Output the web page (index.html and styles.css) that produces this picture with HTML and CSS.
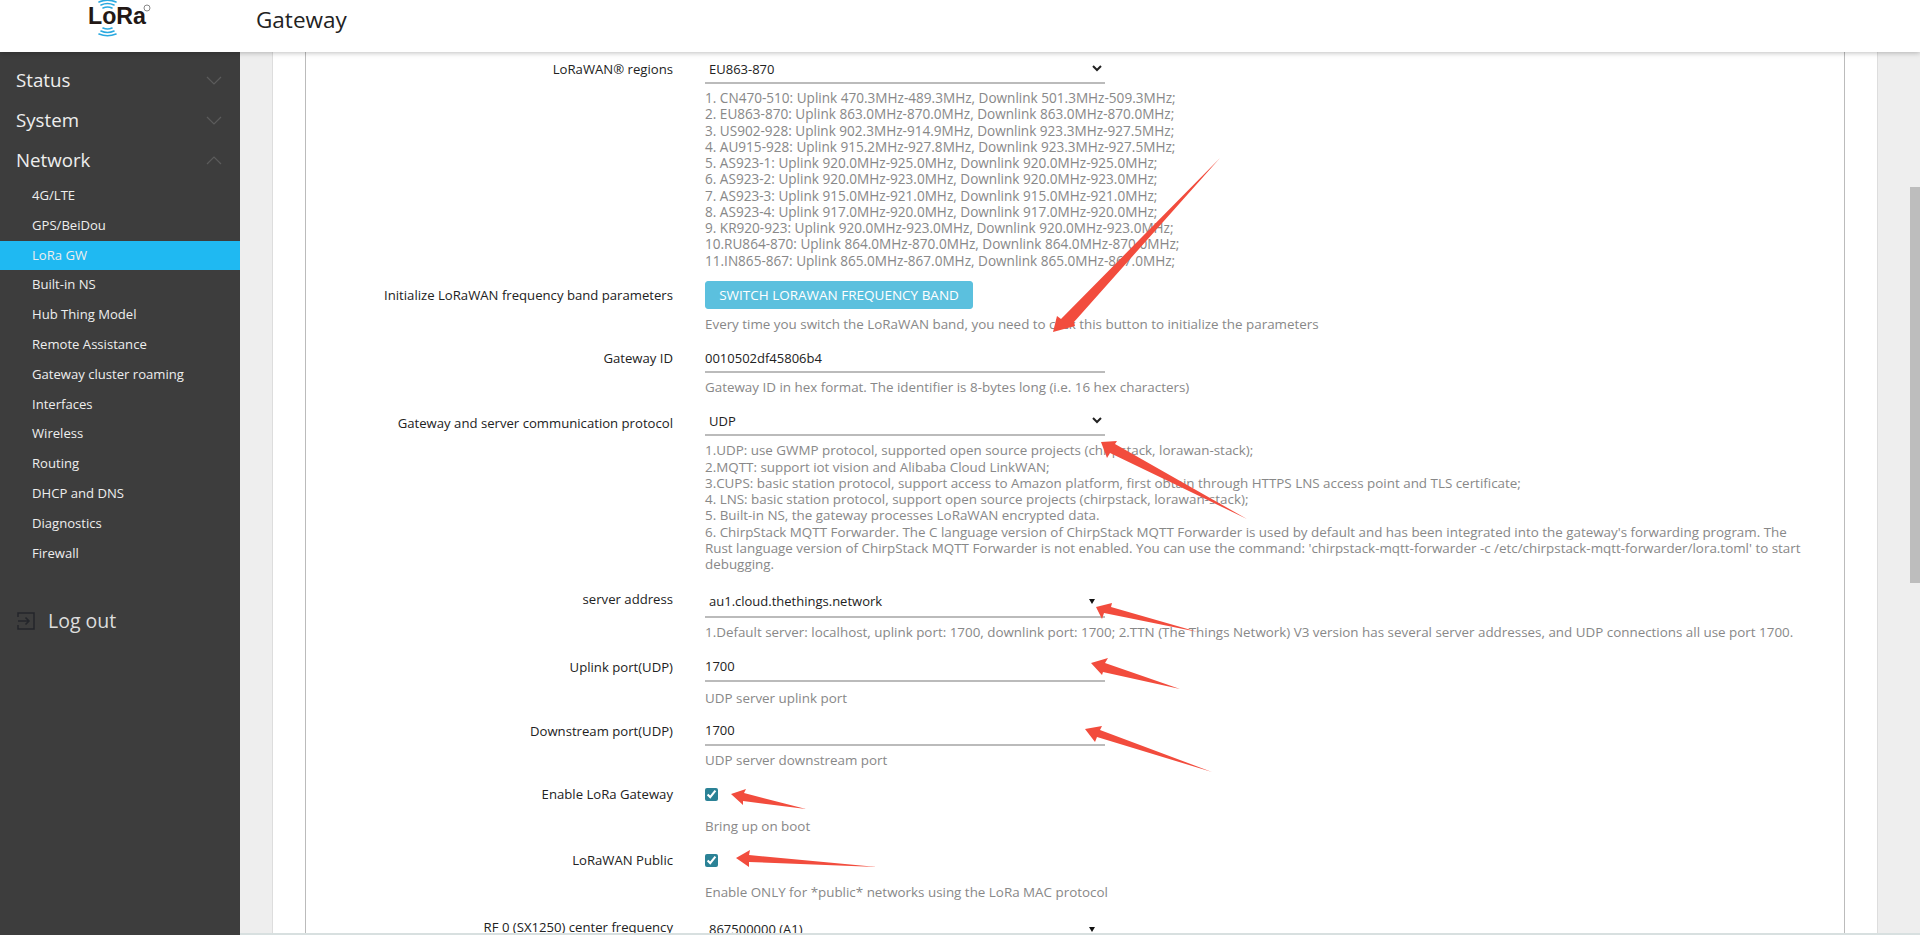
FILE: index.html
```html
<!DOCTYPE html>
<html lang="en">
<head>
<meta charset="utf-8">
<title>Gateway</title>
<link rel="stylesheet" href="styles.css">
</head>
<body>
<header class="topbar">
    <div class="logo">
        <svg width="70" height="40" viewBox="84 0 70 40">
            <g fill="none" stroke="#2aa9e0" stroke-width="1.6" stroke-linecap="round">
                <path d="M99 2 Q107.5 -1.5 116 2"/>
                <path d="M101 5 Q107.5 2 114 5"/>
                <path d="M103 8 Q107.5 6 112 8"/>
                <path d="M103 28 Q107.5 30 112 28"/>
                <path d="M101 31 Q107.5 34 114 31"/>
                <path d="M99 34 Q107.5 37.5 116 34"/>
            </g>
            <text x="88" y="24" class="logo-word" textLength="58" lengthAdjust="spacingAndGlyphs">LoRa</text>
            <circle cx="147" cy="8" r="3" fill="none" stroke="#888" stroke-width="1"/>
        </svg>
    </div>
    <div class="page-title">Gateway</div>
</header>
<div class="layout">
    <aside class="sidebar">
        <div class="menu-top">Status
            <svg class="chevron" width="16" height="9" viewBox="0 0 16 9"><path d="M1 1 L8 8 L15 1"/></svg>
        </div>
        <div class="menu-top">System
            <svg class="chevron" width="16" height="9" viewBox="0 0 16 9"><path d="M1 1 L8 8 L15 1"/></svg>
        </div>
        <div class="menu-top">Network
            <svg class="chevron" width="16" height="9" viewBox="0 0 16 9"><path d="M1 8 L8 1 L15 8"/></svg>
        </div>
        <ul class="submenu">
            <li>4G/LTE</li>
            <li>GPS/BeiDou</li>
            <li class="active">LoRa GW</li>
            <li>Built-in NS</li>
            <li>Hub Thing Model</li>
            <li>Remote Assistance</li>
            <li>Gateway cluster roaming</li>
            <li>Interfaces</li>
            <li>Wireless</li>
            <li>Routing</li>
            <li>DHCP and DNS</li>
            <li>Diagnostics</li>
            <li>Firewall</li>
        </ul>
        <div class="logout">
            <svg width="18" height="18" viewBox="0 0 18 18" fill="none" stroke="#24262b" stroke-width="1.5">
                <path d="M1 5 V1 H17 V17 H1 V13"/>
                <path d="M1 9 H12 M8.5 5.5 L12 9 L8.5 12.5"/>
            </svg>
            <span>Log out</span>
        </div>
    </aside>
    <main class="content">
        <div class="card">
            <div class="panel">
                <div class="row row-wide">
                    <label class="field-label">LoRaWAN® regions</label>
                    <div class="field">
                        <select class="control"><option>EU863-870</option></select>
                        <div class="help help-bands">1. CN470-510: Uplink 470.3MHz-489.3MHz, Downlink 501.3MHz-509.3MHz;<br>
                        2. EU863-870: Uplink 863.0MHz-870.0MHz, Downlink 863.0MHz-870.0MHz;<br>
                        3. US902-928: Uplink 902.3MHz-914.9MHz, Downlink 923.3MHz-927.5MHz;<br>
                        4. AU915-928: Uplink 915.2MHz-927.8MHz, Downlink 923.3MHz-927.5MHz;<br>
                        5. AS923-1: Uplink 920.0MHz-925.0MHz, Downlink 920.0MHz-925.0MHz;<br>
                        6. AS923-2: Uplink 920.0MHz-923.0MHz, Downlink 920.0MHz-923.0MHz;<br>
                        7. AS923-3: Uplink 915.0MHz-921.0MHz, Downlink 915.0MHz-921.0MHz;<br>
                        8. AS923-4: Uplink 917.0MHz-920.0MHz, Downlink 917.0MHz-920.0MHz;<br>
                        9. KR920-923: Uplink 920.0MHz-923.0MHz, Downlink 920.0MHz-923.0MHz;<br>
                        10.RU864-870: Uplink 864.0MHz-870.0MHz, Downlink 864.0MHz-870.0MHz;<br>
                        11.IN865-867: Uplink 865.0MHz-867.0MHz, Downlink 865.0MHz-867.0MHz;</div>
                    </div>
                </div>
                <div class="row">
                    <label class="field-label label-high">Initialize LoRaWAN frequency band parameters</label>
                    <div class="field">
                        <button class="band-button">SWITCH LORAWAN FREQUENCY BAND</button>
                        <div class="help">Every time you switch the LoRaWAN band, you need to click this button to initialize the parameters</div>
                    </div>
                </div>
                <div class="row">
                    <label class="field-label">Gateway ID</label>
                    <div class="field">
                        <input class="control" type="text" value="0010502df45806b4">
                        <div class="help">Gateway ID in hex format. The identifier is 8-bytes long (i.e. 16 hex characters)</div>
                    </div>
                </div>
                <div class="row row-wider">
                    <label class="field-label label-low">Gateway and server communication protocol</label>
                    <div class="field">
                        <select class="control"><option>UDP</option></select>
                        <div class="help">1.UDP: use GWMP protocol, supported open source projects (chirpstack, lorawan-stack);<br>
                        2.MQTT: support iot vision and Alibaba Cloud LinkWAN;<br>
                        3.CUPS: basic station protocol, support access to Amazon platform, first obtain through HTTPS LNS access point and TLS certificate;<br>
                        4. LNS: basic station protocol, support open source projects (chirpstack, lorawan-stack);<br>
                        5. Built-in NS, the gateway processes LoRaWAN encrypted data.<br>
                        6. ChirpStack MQTT Forwarder. The C language version of ChirpStack MQTT Forwarder is used by default and has been integrated into the gateway's forwarding program. The Rust language version of ChirpStack MQTT Forwarder is not enabled. You can use the command: 'chirpstack-mqtt-forwarder -c /etc/chirpstack-mqtt-forwarder/lora.toml' to start debugging.</div>
                    </div>
                </div>
                <div class="row">
                    <label class="field-label label-high">server address</label>
                    <div class="field">
                        <div class="control combo">au1.cloud.thethings.network<span class="combo-arrow"></span></div>
                        <div class="help">1.Default server: localhost, uplink port: 1700, downlink port: 1700; 2.TTN (The Things Network) V3 version has several server addresses, and UDP connections all use port 1700.</div>
                    </div>
                </div>
                <div class="row row-tight">
                    <label class="field-label">Uplink port(UDP)</label>
                    <div class="field">
                        <input class="control" type="text" value="1700">
                        <div class="help help-far">UDP server uplink port</div>
                    </div>
                </div>
                <div class="row">
                    <label class="field-label">Downstream port(UDP)</label>
                    <div class="field">
                        <input class="control" type="text" value="1700">
                        <div class="help">UDP server downstream port</div>
                    </div>
                </div>
                <div class="row">
                    <label class="field-label">Enable LoRa Gateway</label>
                    <div class="field">
                        <div class="check-wrap"><input type="checkbox" checked></div>
                        <div class="help">Bring up on boot</div>
                    </div>
                </div>
                <div class="row row-wide">
                    <label class="field-label">LoRaWAN Public</label>
                    <div class="field">
                        <div class="check-wrap"><input type="checkbox" checked></div>
                        <div class="help">Enable ONLY for *public* networks using the LoRa MAC protocol</div>
                    </div>
                </div>
                <div class="row">
                    <label class="field-label label-high">RF 0 (SX1250) center frequency</label>
                    <div class="field">
                        <div class="control combo">867500000 (A1)<span class="combo-arrow"></span></div>
                    </div>
                </div>
            </div>
        </div>
        <div class="scroll-track"><div class="scroll-thumb"></div></div>
    </main>
</div>
<!-- red arrows someone drew on the screenshot -->
<svg class="arrows" width="1920" height="935" viewBox="0 0 1920 935">
    <polygon points="1053,332 1057,316 1061,319 1220,158 1074,322 1075,326"/>
    <polygon points="1101,442 1117,441 1115,444 1247,519 1110,453 1107,458"/>
    <polygon points="1096,607 1112,603 1111,607 1198,632 1104,613 1102,619"/>
    <polygon points="1091,663 1108,658 1105,663 1180,689 1103,672 1102,675"/>
    <polygon points="1085,729 1102,726 1100,730 1212,772 1097,737 1095,742"/>
    <polygon points="731,794 746,789 744,793 806,809 743,801 743,805"/>
    <polygon points="736,858 750,850 749,855 877,867 749,862 749,867"/>
</svg>
</body>
</html>
```

FILE: styles.css
```css
body {
    margin: 0;
    height: 100vh;
    overflow: hidden;
    display: flex;
    flex-direction: column;
    position: relative;
    font-family: "Open Sans", "Noto Sans", sans-serif;
    font-size: 13.4px;
    color: #222;
}

.topbar {
    flex: none;
    height: 52px;
    display: flex;
    background: #fff;
    box-shadow: 0 1px 5px rgba(0, 0, 0, 0.25);
    position: relative;
    z-index: 2;
}

.logo {
    width: 256px;
    padding-left: 84px;
    box-sizing: border-box;
}

.logo-word {
    font-family: "Liberation Sans", sans-serif;
    font-weight: bold;
    font-size: 24px;
    fill: #231815;
}

.page-title {
    font-size: 22.5px;
    line-height: 40px;
    color: #222;
}

.layout {
    flex: 1;
    min-height: 0;
    display: flex;
}

.sidebar {
    flex: none;
    width: 240px;
    padding-top: 8px;
    background: #3d3d3d;
    color: #eee;
}

.menu-top {
    height: 40px;
    box-sizing: border-box;
    padding: 0 18px 2px 16px;
    display: flex;
    align-items: center;
    justify-content: space-between;
    font-size: 18.7px;
}

.chevron {
    margin-top: 2px;
    fill: none;
    stroke: #5c5c5c;
    stroke-width: 1.2;
}

.submenu {
    list-style: none;
    margin: 1px 0 0;
    padding: 0;
}

.submenu li {
    height: 29.8px;
    line-height: 29.8px;
    padding-left: 32px;
    font-size: 13.1px;
}

.submenu .active {
    background: #1fb9f2;
}

.logout {
    margin-top: 39px;
    padding-left: 17px;
    display: flex;
    align-items: center;
    gap: 13px;
    font-size: 19.5px;
    color: #ddd;
}

.content {
    flex: 1;
    min-width: 0;
    display: flex;
    position: relative;
    padding-left: 32px;
    background: #eee;
    overflow: hidden;
}

/* thin strip at the very bottom of the window */
.content::after {
    content: "";
    position: absolute;
    left: 0;
    right: 0;
    bottom: 0;
    height: 2px;
    background: #d8e0e0;
}

.card {
    flex: none;
    width: 1606px;
    box-sizing: border-box;
    padding: 0 32px;
    background: #fff;
    border-left: 1px solid #ddd;
    border-right: 1px solid #ddd;
}

.panel {
    height: 100%;
    border-left: 1px solid #bbb;
    border-right: 1px solid #bbb;
}

.scroll-track {
    flex: none;
    width: 10px;
    margin-left: auto;
    padding-top: 135px;
    box-sizing: border-box;
}

.scroll-thumb {
    height: 396px;
    background: #bdbdbd;
}

.row {
    display: flex;
    margin-bottom: 9px;
}

.row-tight {
    margin-bottom: 8px;
}

.row-wide {
    margin-bottom: 12px;
}

.row-wider {
    margin-bottom: 13px;
}

.field-label {
    flex: none;
    width: 367px;
    margin-right: 32px;
    padding-top: 9px;
    font-size: 13.15px;
    line-height: 16px;
    text-align: right;
    color: #222;
}

.label-high {
    padding-top: 6px;
}

.label-low {
    padding-top: 11px;
}

.field {
    flex: 1;
    min-width: 0;
    padding-right: 38px;
}

.control {
    display: block;
    width: 400px;
    height: 32px;
    box-sizing: border-box;
    padding: 3px 0 0;
    border: none;
    border-bottom: 2px solid #bbb;
    background: transparent;
    font-family: inherit;
    font-size: 13px;
    color: #222;
    outline: none;
}

.combo {
    height: 33px;
    padding: 9px 10px 0 4px;
    line-height: 14px;
    display: flex;
    justify-content: space-between;
}

.combo-arrow {
    width: 0;
    height: 0;
    margin-top: 5px;
    border-left: 3px solid transparent;
    border-right: 3px solid transparent;
    border-top: 5px solid #111;
}

.band-button {
    display: block;
    width: 268px;
    height: 28px;
    padding: 0;
    border: 1px solid #5bc0de;
    border-radius: 3px;
    background: #5bc0de;
    font-family: inherit;
    font-size: 13.5px;
    color: #fff;
}

.help {
    margin-top: 6px;
    line-height: 16.25px;
    color: #888;
}

.help-bands {
    font-size: 13.58px;
}

.band-button + .help {
    margin-top: 7px;
}

.help-far {
    margin-top: 8px;
}

.check-wrap {
    height: 34px;
    box-sizing: border-box;
    padding-top: 11px;
}

.check-wrap input {
    display: block;
    width: 13px;
    height: 13px;
    margin: 0;
    accent-color: #2b8296;
}

.check-wrap + .help {
    margin-top: 7px;
}

.arrows {
    position: absolute;
    top: 0;
    left: 0;
    z-index: 3;
    pointer-events: none;
    fill: #f24c3d;
}
```
